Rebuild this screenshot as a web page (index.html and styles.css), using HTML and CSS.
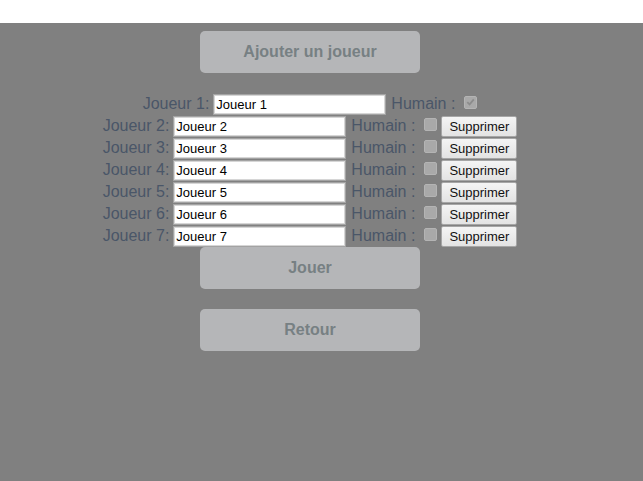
FILE: index.html
```html
<!DOCTYPE html>
<html lang="fr">
<head>
<meta charset="utf-8">
<title>Joueurs</title>
<link rel="stylesheet" href="styles.css">
</head>
<body>
<div class="topbar"></div>
<main class="stage">
  <div class="panel">
    <button class="big-btn first">Ajouter un joueur</button>
    <div class="rows">
      <div class="row">
        <span class="lbl">Joueur 1:</span>
        <input class="name" type="text" value="Joueur 1">
        <span class="hum">Humain :</span>
        <span class="cb checked"><svg viewBox="0 0 12 12" width="12" height="12"><path d="M2.5 6.2 L5 8.6 L9.6 3.2" fill="none" stroke="#8c8c8c" stroke-width="2"/></svg></span>
      </div>
      <div class="row">
        <span class="lbl">Joueur 2:</span>
        <input class="name" type="text" value="Joueur 2">
        <span class="hum">Humain :</span>
        <span class="cb"></span>
        <button class="del">Supprimer</button>
      </div>
      <div class="row">
        <span class="lbl">Joueur 3:</span>
        <input class="name" type="text" value="Joueur 3">
        <span class="hum">Humain :</span>
        <span class="cb"></span>
        <button class="del">Supprimer</button>
      </div>
      <div class="row">
        <span class="lbl">Joueur 4:</span>
        <input class="name" type="text" value="Joueur 4">
        <span class="hum">Humain :</span>
        <span class="cb"></span>
        <button class="del">Supprimer</button>
      </div>
      <div class="row">
        <span class="lbl">Joueur 5:</span>
        <input class="name" type="text" value="Joueur 5">
        <span class="hum">Humain :</span>
        <span class="cb"></span>
        <button class="del">Supprimer</button>
      </div>
      <div class="row">
        <span class="lbl">Joueur 6:</span>
        <input class="name" type="text" value="Joueur 6">
        <span class="hum">Humain :</span>
        <span class="cb"></span>
        <button class="del">Supprimer</button>
      </div>
      <div class="row">
        <span class="lbl">Joueur 7:</span>
        <input class="name" type="text" value="Joueur 7">
        <span class="hum">Humain :</span>
        <span class="cb"></span>
        <button class="del">Supprimer</button>
      </div>
    </div>
    <button class="big-btn play">Jouer</button>
    <button class="big-btn back">Retour</button>
  </div>
</main>
</body>
</html>
```

FILE: styles.css
```css
html, body {
  margin: 0;
  padding: 0;
  height: 100%;
}
body {
  background: #ffffff;
  font-family: "Liberation Sans", Arial, sans-serif;
  display: flex;
  flex-direction: column;
}
.topbar {
  height: 23px;
  flex: none;
  background: #ffffff;
}
.stage {
  flex: 1;
  background: #808080;
}
.panel {
  width: 620px;
  display: flex;
  flex-direction: column;
  align-items: center;
}
.big-btn {
  width: 220px;
  height: 42px;
  border: none;
  border-radius: 5px;
  background: #b5b6b8;
  color: #778083;
  font-family: "Liberation Sans", Arial, sans-serif;
  font-weight: bold;
  font-size: 16px;
  padding: 0;
  cursor: pointer;
}
.first { margin-top: 8px; }
.play { margin-top: 0; }
.back { margin-top: 20px; }
.rows {
  margin-top: 20px;
  display: flex;
  flex-direction: column;
  align-self: stretch;
}
.row {
  height: 22px;
  display: flex;
  align-items: center;
  justify-content: center;
}
.lbl, .hum {
  font-size: 16px;
  color: #4a5668;
  white-space: nowrap;
}
.lbl { margin-right: 4px; }
.hum { margin-left: 5px; }
.name {
  width: 173px;
  height: 21px;
  box-sizing: border-box;
  margin: 0;
  padding: 1px 2px;
  border: 1px solid #a3a3a3;
  box-shadow: inset 0 0 0 1px #d6d6d6;
  background: #ffffff;
  color: #000000;
  font-family: "Liberation Sans", Arial, sans-serif;
  font-size: 13px;
  outline: none;
}
.cb {
  width: 13px;
  height: 13px;
  box-sizing: border-box;
  margin-left: 9px;
  margin-top: -4px;
  border: 1px solid #b4b4b4;
  border-radius: 2px;
  background: #a9a9a9;
  display: flex;
  align-items: center;
  justify-content: center;
}
.cb svg { display: block; }
.del {
  margin-left: 4px;
  width: 76px;
  height: 21px;
  box-sizing: border-box;
  padding: 0 4px;
  border: 1px solid #a6a6a6;
  border-radius: 2px;
  background: linear-gradient(#f4f4f4, #e3e3e3);
  color: #111111;
  font-family: "Liberation Sans", Arial, sans-serif;
  font-size: 13px;
}
```
